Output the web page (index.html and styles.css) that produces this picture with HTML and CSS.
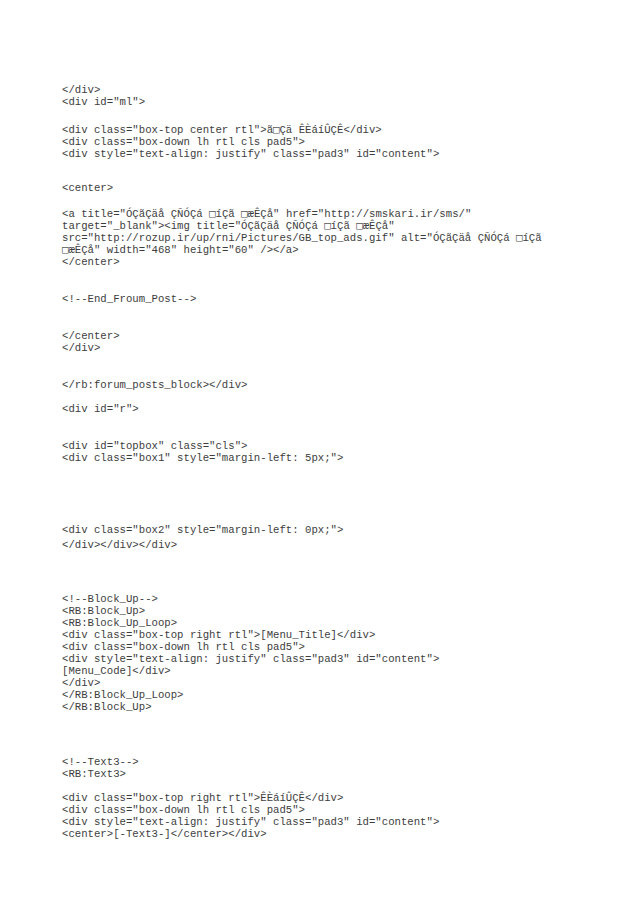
FILE: index.html
```html
<!DOCTYPE html>
<html>
<head>
<meta charset="utf-8">
<link rel="stylesheet" href="styles.css">
</head>
<body>
<div class="doc">
  <div class="para">
    <div class="ln">&lt;/div&gt;</div>
    <div class="ln">&lt;div id="ml"&gt;</div>
  </div>
  <div class="para g16">
    <div class="ln">&lt;div class="box-top center rtl"&gt;ã<span class="bx">□</span>Çä ÊÈáíÛÇÊ&lt;/div&gt;</div>
    <div class="ln">&lt;div class="box-down lh rtl cls pad5"&gt;</div>
    <div class="ln">&lt;div style="text-align: justify" class="pad3" id="content"&gt;</div>
  </div>
  <div class="para g22">
    <div class="ln">&lt;center&gt;</div>
  </div>
  <div class="para g14">
    <div class="ln">&lt;a title="ÓÇãÇäå ÇÑÓÇá <span class="bx">□</span>íÇã <span class="bx">□</span>æÊÇå" href="http://smskari.ir/sms/"</div>
    <div class="ln">target="_blank"&gt;&lt;img title="ÓÇãÇäå ÇÑÓÇá <span class="bx">□</span>íÇã <span class="bx">□</span>æÊÇå"</div>
    <div class="ln">src="http://rozup.ir/up/rni/Pictures/GB_top_ads.gif" alt="ÓÇãÇäå ÇÑÓÇá <span class="bx">□</span>íÇã</div>
    <div class="ln"><span class="bx">□</span>æÊÇå" width="468" height="60" /&gt;&lt;/a&gt;</div>
    <div class="ln">&lt;/center&gt;</div>
  </div>
  <div class="para g25">
    <div class="ln">&lt;!--End_Froum_Post--&gt;</div>
  </div>
  <div class="para g25">
    <div class="ln">&lt;/center&gt;</div>
    <div class="ln">&lt;/div&gt;</div>
  </div>
  <div class="para g25">
    <div class="ln">&lt;/rb:forum_posts_block&gt;&lt;/div&gt;</div>
  </div>
  <div class="para g12">
    <div class="ln">&lt;div id="r"&gt;</div>
  </div>
  <div class="para g25">
    <div class="ln">&lt;div id="topbox" class="cls"&gt;</div>
    <div class="ln">&lt;div class="box1" style="margin-left: 5px;"&gt;</div>
  </div>
  <div class="para g60">
    <div class="ln">&lt;div class="box2" style="margin-left: 0px;"&gt;</div>
  </div>
  <div class="para g3">
    <div class="ln">&lt;/div&gt;&lt;/div&gt;&lt;/div&gt;</div>
  </div>
  <div class="para g42">
    <div class="ln">&lt;!--Block_Up--&gt;</div>
    <div class="ln">&lt;RB:Block_Up&gt;</div>
    <div class="ln">&lt;RB:Block_Up_Loop&gt;</div>
    <div class="ln">&lt;div class="box-top right rtl"&gt;[Menu_Title]&lt;/div&gt;</div>
    <div class="ln">&lt;div class="box-down lh rtl cls pad5"&gt;</div>
    <div class="ln">&lt;div style="text-align: justify" class="pad3" id="content"&gt;</div>
    <div class="ln">[Menu_Code]&lt;/div&gt;</div>
    <div class="ln">&lt;/div&gt;</div>
    <div class="ln">&lt;/RB:Block_Up_Loop&gt;</div>
    <div class="ln">&lt;/RB:Block_Up&gt;</div>
  </div>
  <div class="para g43">
    <div class="ln">&lt;!--Text3--&gt;</div>
    <div class="ln">&lt;RB:Text3&gt;</div>
  </div>
  <div class="para g12">
    <div class="ln">&lt;div class="box-top right rtl"&gt;ÊÈáíÛÇÊ&lt;/div&gt;</div>
    <div class="ln">&lt;div class="box-down lh rtl cls pad5"&gt;</div>
    <div class="ln">&lt;div style="text-align: justify" class="pad3" id="content"&gt;</div>
    <div class="ln">&lt;center&gt;[-Text3-]&lt;/center&gt;&lt;/div&gt;</div>
  </div>
</div>
</body>
</html>
```
FILE: styles.css
```css
html, body {
  margin: 0;
  padding: 0;
  background: #ffffff;
}
.doc {
  display: flex;
  flex-direction: column;
  padding: 84px 0 0 62px;
  font-family: "Liberation Mono", "DejaVu Sans Mono", monospace;
  font-size: 10.67px;
  color: #3d3d3d;
}
.ln {
  line-height: 12px;
  height: 12px;
  white-space: pre;
}
.bx {
  font-family: "DejaVu Sans Mono", monospace;
  font-size: 10.67px;
  color: #555;
}
.g3 { margin-top: 3px; }
.g12 { margin-top: 12px; }
.g14 { margin-top: 14px; }
.g16 { margin-top: 16px; }
.g22 { margin-top: 22px; }
.g25 { margin-top: 25px; }
.g42 { margin-top: 42px; }
.g43 { margin-top: 43px; }
.g60 { margin-top: 60px; }
```
